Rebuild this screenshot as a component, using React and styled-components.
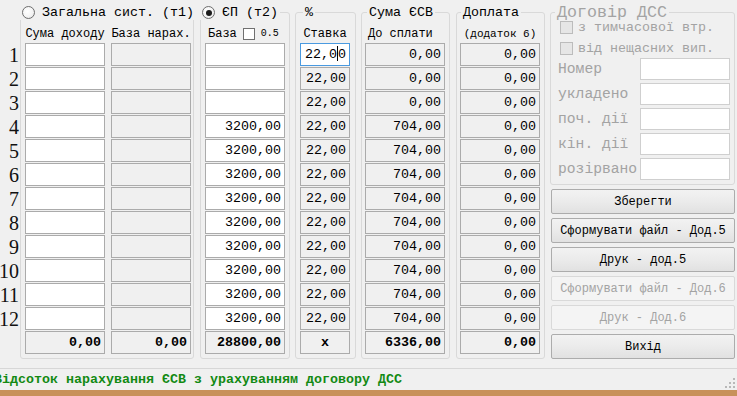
import React from 'react'
import styled, { createGlobalStyle } from 'styled-components'

const GlobalStyle = createGlobalStyle`
    html, body {
        margin: 0;
        padding: 0;
        background: #f0f0f0;
    }
    body {
        font-family: "Liberation Mono", "Courier New", monospace;
    }
`

const Window = styled.div`
    width: 737px;
    height: 396px;
    background: #f0f0f0;
    display: flex;
    flex-direction: column;
    overflow: hidden;
    color: #000;
    font-family: "Liberation Mono", "Courier New", monospace;
`

const Main = styled.div`
    display: flex;
    align-items: flex-start;
    padding-top: 5px;
    height: 363px;
`

const RowNumbers = styled.div`
    width: 20px;
    flex: none;
    padding-top: 38px;
    display: flex;
    flex-direction: column;
    align-items: flex-end;
    font-family: "Liberation Serif", "Times New Roman", serif;
    font-size: 20px;
    color: #111;
`

const RowNumber = styled.div`
    height: 24px;
    line-height: 24px;
    padding-right: 1px;
`

const Group = styled.fieldset`
    margin: 0;
    margin-left: ${(p) => p.$ml || 0}px;
    padding: 0;
    border: 1px solid #d9d9d9;
    border-radius: 3px;
    width: ${(p) => p.$w}px;
    min-width: 0;
    box-sizing: border-box;
    flex: none;
`

const Legend = styled.legend`
    margin-left: ${(p) => p.$offset || 0}px;
    padding: 0 2px;
    height: 15px;
    line-height: 15px;
    font-size: ${(p) => p.$size || 13.33}px;
    white-space: nowrap;
    color: ${(p) => (p.$disabled ? '#a3a3a3' : '#000')};
`

const LegendInner = styled.span`
    display: inline-flex;
    align-items: center;
    gap: 7px;
    height: 15px;
`

const Radio = styled.span`
    display: inline-block;
    position: relative;
    width: 13px;
    height: 13px;
    box-sizing: border-box;
    border-radius: 50%;
    border: 1px solid #6e6e6e;
    background: radial-gradient(circle at 40% 40%, #ffffff 0%, #f4f4f4 55%, #dcdcdc 100%);
    &::after {
        content: '';
        display: ${(p) => (p.$checked ? 'block' : 'none')};
        position: absolute;
        left: 2.5px;
        top: 2.5px;
        width: 6px;
        height: 6px;
        border-radius: 50%;
        background: #1b1b1b;
    }
`

const Body = styled.div`
    padding: 0 1px 4px ${(p) => p.$pl || 4}px;
`

const Header = styled.div`
    height: 23px;
    box-sizing: border-box;
    padding-top: 5px;
    display: flex;
    align-items: center;
    gap: 6px;
    font-size: 12px;
    line-height: 14px;
`

const HeaderCell = styled.div`
    width: ${(p) => p.$w}px;
    height: 14px;
    text-align: ${(p) => p.$align || 'center'};
    padding-left: ${(p) => p.$pl || 0}px;
    box-sizing: border-box;
    white-space: nowrap;
    display: flex;
    align-items: center;
    justify-content: ${(p) => (p.$align === 'left' ? 'flex-start' : 'center')};
    gap: 6px;
`

const SmallCheck = styled.span`
    display: inline-block;
    width: 12px;
    height: 12px;
    box-sizing: border-box;
    border: 1px solid #707070;
    background: #fff;
`

const Small = styled.span`
    font-size: 10px;
`

const Row = styled.div`
    display: flex;
    gap: 6px;
    height: 23px;
    margin-bottom: 1px;
`

const TotalRow = styled(Row)`
    margin-top: 1px;
    margin-bottom: 0;
`

const Cell = styled.div`
    width: ${(p) => p.$w || 80}px;
    height: 23px;
    box-sizing: border-box;
    border: 1px solid ${(p) => (p.$focus ? '#4a9ae0' : '#ababab')};
    background: ${(p) => (p.$editable || p.$focus ? '#fff' : '#f0f0f0')};
    font-size: 13.33px;
    line-height: 21px;
    text-align: ${(p) => (p.$center ? 'center' : 'right')};
    padding-right: ${(p) => (p.$center ? 0 : 3)}px;
    font-weight: ${(p) => (p.$bold ? 700 : 400)};
    white-space: nowrap;
`

const Caret = styled.span`
    display: inline-block;
    width: 1px;
    height: 15px;
    background: #000;
    vertical-align: -3px;
`

const Side = styled.div`
    width: 185px;
    flex: none;
    margin-left: 5px;
    display: flex;
    flex-direction: column;
    gap: 4px;
`

const SideBody = styled.div`
    padding: 0 4px 4px 7px;
    display: flex;
    flex-direction: column;
`

const CheckRow = styled.div`
    height: 15px;
    margin-top: ${(p) => p.$mt || 0}px;
    display: flex;
    align-items: center;
    gap: 5px;
    padding-left: 2px;
    font-size: 13.33px;
    color: #a3a3a3;
    white-space: nowrap;
`

const DisabledCheck = styled.span`
    display: inline-block;
    width: 13px;
    height: 13px;
    box-sizing: border-box;
    border: 1px solid #bcbcbc;
    background: #e6e6e6;
`

const FieldList = styled.div`
    margin-top: 2px;
    display: flex;
    flex-direction: column;
    gap: 3px;
`

const FieldRow = styled.div`
    display: flex;
    align-items: center;
    height: 22px;
`

const FieldLabel = styled.div`
    width: 82px;
    font-size: 14.67px;
    color: #a3a3a3;
    white-space: nowrap;
`

const FieldInput = styled.div`
    width: 90px;
    height: 22px;
    box-sizing: border-box;
    border: 1px solid #cfcfcf;
    background: #fff;
`

const Button = styled.div`
    margin-left: 1px;
    width: 184px;
    height: 25px;
    box-sizing: border-box;
    border: 1px solid ${(p) => (p.$disabled ? '#d9d9d9' : '#acacac')};
    border-radius: 2px;
    background: ${(p) =>
        p.$disabled ? '#f4f4f4' : 'linear-gradient(#f2f2f2, #ebebeb 50%, #e1e1e1)'};
    color: ${(p) => (p.$disabled ? '#a3a3a3' : '#000')};
    font-size: 12px;
    display: flex;
    align-items: center;
    justify-content: center;
    white-space: nowrap;
`

const StatusBar = styled.div`
    height: 21px;
    border-top: 1px solid #d7d7d7;
    display: flex;
    align-items: center;
`

const StatusText = styled.div`
    margin-left: -6px;
    font-size: 13.33px;
    font-weight: 700;
    color: #138a13;
    white-space: nowrap;
`

const Grip = styled.svg`
    margin-left: auto;
    align-self: flex-end;
    margin-bottom: 1px;
    margin-right: 1px;
`

const Strip = styled.div`
    height: 6px;
    background: #c8915a;
`

const rows = Array.from({ length: 12 }, (_, i) => i)
const ep = (i) => (i < 3 ? '' : '3200,00')
const esv = (i) => (i < 3 ? '0,00' : '704,00')

const App = () => {
    return (
        <Window>
            <GlobalStyle />
            <Main>
                <RowNumbers>
                    {rows.map((i) => (
                        <RowNumber key={i}>{i + 1}</RowNumber>
                    ))}
                </RowNumbers>

                <Group $w={174}>
                    <Legend $offset={-1}>
                        <LegendInner>
                            <Radio />
                            Загальна сист. (т1)
                        </LegendInner>
                    </Legend>
                    <Body>
                        <Header>
                            <HeaderCell $w={80}>Сума доходу</HeaderCell>
                            <HeaderCell $w={80}>База нарах.</HeaderCell>
                        </Header>
                        {rows.map((i) => (
                            <Row key={i}>
                                <Cell $editable />
                                <Cell />
                            </Row>
                        ))}
                        <TotalRow>
                            <Cell $bold>0,00</Cell>
                            <Cell $bold>0,00</Cell>
                        </TotalRow>
                    </Body>
                </Group>

                <Group $w={90} $ml={6}>
                    <Legend $offset={-1}>
                        <LegendInner>
                            <Radio $checked />
                            ЄП (т2)
                        </LegendInner>
                    </Legend>
                    <Body>
                        <Header>
                            <HeaderCell $w={80} $align="left" $pl={3}>
                                База <SmallCheck /> <Small>0.5</Small>
                            </HeaderCell>
                        </Header>
                        {rows.map((i) => (
                            <Row key={i}>
                                <Cell $editable>{ep(i)}</Cell>
                            </Row>
                        ))}
                        <TotalRow>
                            <Cell $bold>28800,00</Cell>
                        </TotalRow>
                    </Body>
                </Group>

                <Group $w={61} $ml={5}>
                    <Legend $offset={7}>%</Legend>
                    <Body>
                        <Header>
                            <HeaderCell $w={50}>Ставка</HeaderCell>
                        </Header>
                        {rows.map((i) => (
                            <Row key={i}>
                                {i === 0 ? (
                                    <Cell $w={50} $focus>
                                        22,0<Caret />0
                                    </Cell>
                                ) : (
                                    <Cell $w={50}>22,00</Cell>
                                )}
                            </Row>
                        ))}
                        <TotalRow>
                            <Cell $w={50} $bold $center>x</Cell>
                        </TotalRow>
                    </Body>
                </Group>

                <Group $w={89} $ml={5}>
                    <Legend $offset={5}>Сума ЄСВ</Legend>
                    <Body $pl={3}>
                        <Header>
                            <HeaderCell $w={80} $align="left" $pl={3}>До сплати</HeaderCell>
                        </Header>
                        {rows.map((i) => (
                            <Row key={i}>
                                <Cell>{esv(i)}</Cell>
                            </Row>
                        ))}
                        <TotalRow>
                            <Cell $bold>6336,00</Cell>
                        </TotalRow>
                    </Body>
                </Group>

                <Group $w={89} $ml={6}>
                    <Legend $offset={4}>Доплата</Legend>
                    <Body $pl={3}>
                        <Header>
                            <HeaderCell $w={80}>
                                <span style={{ fontSize: '11px' }}>(додаток 6)</span>
                            </HeaderCell>
                        </Header>
                        {rows.map((i) => (
                            <Row key={i}>
                                <Cell>0,00</Cell>
                            </Row>
                        ))}
                        <TotalRow>
                            <Cell $bold>0,00</Cell>
                        </TotalRow>
                    </Body>
                </Group>

                <Side>
                    <Group $w={185}>
                        <Legend $offset={4} $size={16.67} $disabled>Договір ДСС</Legend>
                        <SideBody>
                            <CheckRow>
                                <DisabledCheck />з тимчасової втр.
                            </CheckRow>
                            <CheckRow $mt={6}>
                                <DisabledCheck />від нещасних вип.
                            </CheckRow>
                            <FieldList>
                                {['Номер', 'укладено', 'поч. дії', 'кін. дії', 'розірвано'].map((l) => (
                                    <FieldRow key={l}>
                                        <FieldLabel>{l}</FieldLabel>
                                        <FieldInput />
                                    </FieldRow>
                                ))}
                            </FieldList>
                        </SideBody>
                    </Group>
                    <Button>Зберегти</Button>
                    <Button>Сформувати файл - Дод.5</Button>
                    <Button>Друк - дод.5</Button>
                    <Button $disabled>Сформувати файл - Дод.6</Button>
                    <Button $disabled>Друк - Дод.6</Button>
                    <Button>Вихід</Button>
                </Side>
            </Main>

            <StatusBar>
                <StatusText>Відсоток нарахування ЄСВ з урахуванням договору ДСС</StatusText>
                <Grip width="11" height="11" viewBox="0 0 11 11">
                    {[
                        [8, 0], [8, 4], [4, 4], [8, 8], [4, 8], [0, 8],
                    ].map(([x, y]) => (
                        <rect key={`${x}-${y}`} x={x} y={y} width="2" height="2" fill="#b8b8b8" />
                    ))}
                </Grip>
            </StatusBar>
            <Strip />
        </Window>
    )
}

export default App
